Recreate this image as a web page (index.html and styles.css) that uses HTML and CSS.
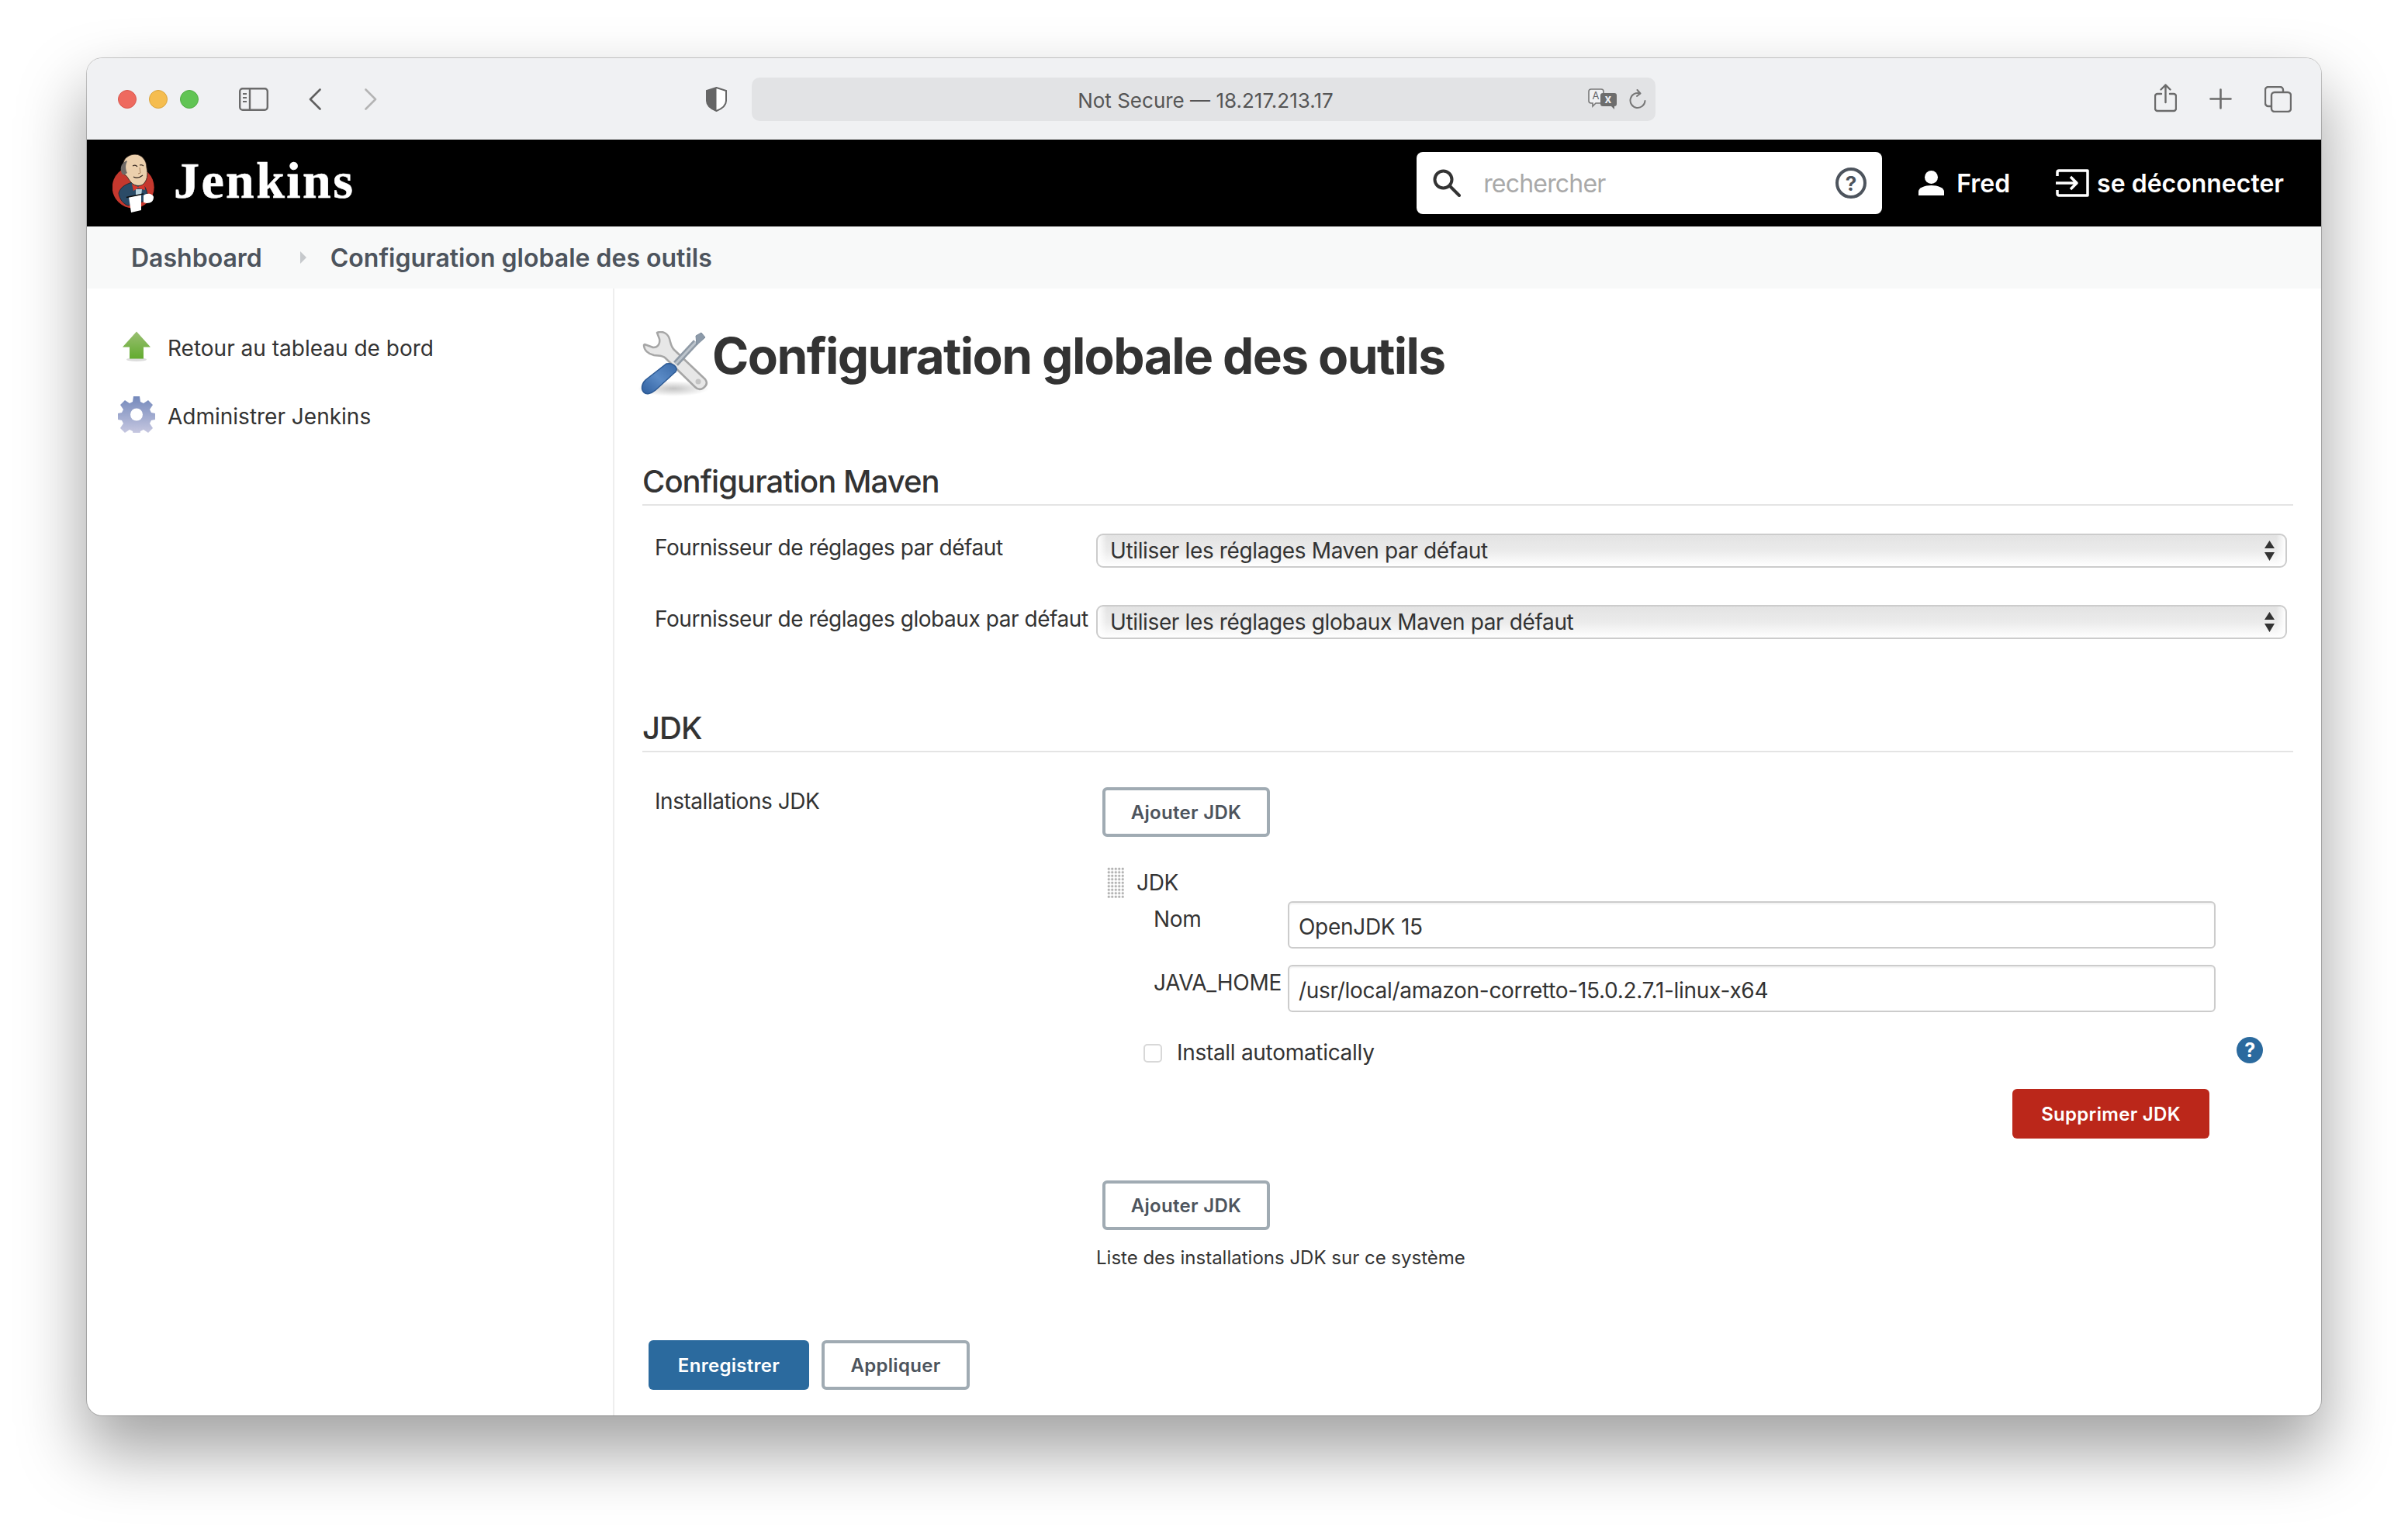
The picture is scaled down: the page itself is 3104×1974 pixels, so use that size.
FILE: index.html
```html
<!DOCTYPE html>
<html lang="fr">
<head>
    <meta charset="UTF-8">
    <title>Configuration globale des outils [Jenkins]</title>
    <link rel="stylesheet" href="styles.css">
</head>
<body>
<div class="window">

    <!-- Safari toolbar -->
    <div class="toolbar">
        <span class="light light-red"></span>
        <span class="light light-yellow"></span>
        <span class="light light-green"></span>
        <svg class="tb-sidebar" viewBox="0 0 38 30" fill="none" stroke="#6b6b6b" stroke-width="2.4">
            <rect x="1.2" y="1.2" width="35.6" height="27.6" rx="3.5"/>
            <path d="M14 1.2v27.6"/>
            <path d="M5 8h5M5 13h5M5 18h5" stroke-width="2"/>
        </svg>
        <svg class="tb-back" viewBox="0 0 16 28" fill="none" stroke="#5f5f5f" stroke-width="2.6" stroke-linecap="round" stroke-linejoin="round">
            <path d="M14.5 1.5 2 14l12.5 12.5"/>
        </svg>
        <svg class="tb-forward" viewBox="0 0 16 28" fill="none" stroke="#b4b4b4" stroke-width="2.6" stroke-linecap="round" stroke-linejoin="round">
            <path d="M1.5 1.5 14 14 1.5 26.5"/>
        </svg>
        <svg class="tb-shield" viewBox="0 0 27 32">
            <path d="M13.5 1 26 5v13c0 6-5 10-12.500 13C6 28 1 24 1 18V5Z" fill="#fff" stroke="#666" stroke-width="2"/>
            <path d="M13.500 1 1 5v13c0 6 5 10 12.500 13Z" fill="#666"/>
        </svg>
        <div class="address">
            <span class="address-text">Not Secure — 18.217.213.17</span>
            <svg class="tb-translate" viewBox="0 0 38 27">
                <path d="M4 1h13a3 3 0 0 1 3 3v12a3 3 0 0 1-3 3H10l-4 4v-4H4a3 3 0 0 1-3-3V4a3 3 0 0 1 3-3Z" fill="#f0f1f3" stroke="#777" stroke-width="1.600"/>
                <text x="5.500" y="14" class="tr-a">A</text>
                <path d="M19 6h15a3 3 0 0 1 3 3v11a3 3 0 0 1-3 3v4l-4-4H19a3 3 0 0 1-3-3V9a3 3 0 0 1 3-3Z" fill="#6d6d6d"/>
                <text x="21.500" y="19" class="tr-x">x</text>
            </svg>
            <svg class="tb-reload" viewBox="0 0 22 26" fill="none" stroke="#777" stroke-width="2" stroke-linecap="round" stroke-linejoin="round">
                <path d="M14 5.500A9.500 9.500 0 1 0 20.500 15"/>
                <path d="M10.500 1l4 4.500-4.500 3.500"/>
            </svg>
        </div>
        <svg class="tb-share" viewBox="0 0 29 37" fill="none" stroke="#6b6b6b" stroke-width="2.400" stroke-linecap="round" stroke-linejoin="round">
            <path d="M9 13H4a3 3 0 0 0-3 3v16a3 3 0 0 0 3 3h21a3 3 0 0 0 3-3V16a3 3 0 0 0-3-3h-5"/>
            <path d="M14.500 24V1.500M8.500 7.500l6-6 6 6"/>
        </svg>
        <svg class="tb-plus" viewBox="0 0 29 27" fill="none" stroke="#6b6b6b" stroke-width="2.600" stroke-linecap="round">
            <path d="M14.500 1.500v24M1.500 13.500h26"/>
        </svg>
        <svg class="tb-tabs" viewBox="0 0 35 34" fill="none" stroke="#6b6b6b" stroke-width="2.400">
            <path d="M8 26H5a4 4 0 0 1-4-4V5a4 4 0 0 1 4-4h15a4 4 0 0 1 4 4v3"/>
            <rect x="9" y="8" width="25" height="25" rx="4"/>
        </svg>
    </div>

    <!-- Jenkins header -->
    <header class="page-head">
        <svg class="logo" viewBox="0 0 55 75">
            <circle cx="26.700" cy="42.500" r="27" fill="#c5382e"/>
            <path d="M8 50C10 42 18 38 26 36l12 2c5 4 7 10 7 16l-2 6-23 6C14 64 9 58 8 50Z" fill="#2b4b67" stroke="#16242f" stroke-width=".8"/>
            <path d="M30 45h8l-1 9-7-2Z" fill="#b9d2dc"/>
            <path d="M25 38l8 4 8-5 1 9-9-2.500L27 47Z" fill="#d8392c"/>
            <path d="M14 14C13 5 22 0 29 0c9 0 15 8 15 17 2 9 1 17-5 22-5 3-12 1-15-3-3-3-5-8-7-9-4-1-6-7-3-13Z" fill="#ecd0ad" stroke="#33261f" stroke-width=".9"/>
            <path d="M13 26C9 20 10 12 18 8l1 1c-3 5-2 11 0 15l-3 2Z" fill="#6f6a66"/>
            <path d="M26 15q4-2 6 1M35 14q3-1 5 1M27 29q6 3 12-2" fill="none" stroke="#33261f" stroke-width="1.200"/>
            <path d="M35 17l1 7-3 1" fill="none" stroke="#a9825f" stroke-width="1"/>
            <path d="M21 55l16-3v20l-13 3Z" fill="#fff"/>
            <path d="M18 55.500 40 51" stroke="#0c0c0c" stroke-width="1.500"/>
            <path d="M40 53c5-4 12-2 13 2 0 5-3 8-9 8l-4-1Z" fill="#fff"/>
        </svg>
        <span class="brand">Jenkins</span>
        <div class="search">
            <svg class="search-icon" viewBox="0 0 36 36" fill="none" stroke="#333" stroke-width="4" stroke-linecap="round">
                <circle cx="13.500" cy="13.500" r="11"/>
                <path d="m22 22 12 12"/>
            </svg>
            <input class="search-input" type="text" placeholder="rechercher">
            <span class="search-help">?</span>
        </div>
        <svg class="user-icon" viewBox="0 0 33 32" fill="#fff">
            <circle cx="16.500" cy="8.500" r="8.500"/>
            <path d="M0 32v-5c0-5 8-8 16.500-8S33 22 33 27v5Z"/>
        </svg>
        <span class="head-link head-user">Fred</span>
        <svg class="logout-icon" viewBox="0 0 43 36" fill="none" stroke="#fff" stroke-width="3.500" stroke-linejoin="round">
            <path d="M2 9V4a2 2 0 0 1 2-2h37v32H4a2 2 0 0 1-2-2v-5"/>
            <path d="M0 18h26M19 10l8 8-8 8"/>
        </svg>
        <span class="head-link head-logout">se déconnecter</span>
    </header>

    <!-- Breadcrumb -->
    <nav class="breadcrumb">
        <span>Dashboard</span>
        <svg class="crumb-arrow" viewBox="0 0 8 16"><path d="M0 0l8 8-8 8Z" fill="#c6c9cc"/></svg>
        <span>Configuration globale des outils</span>
    </nav>

    <div class="main">
        <aside class="sidebar">
            <div class="side-item">
                <svg class="side-icon" viewBox="0 0 48 40">
                    <defs>
                        <linearGradient id="arrowGreen" x1="0" y1="0" x2="0" y2="1">
                            <stop offset="0" stop-color="#9abf72"/>
                            <stop offset="1" stop-color="#62ab2f"/>
                        </linearGradient>
                    </defs>
                    <ellipse cx="24" cy="37" rx="13" ry="2.500" fill="#ddd"/>
                    <path d="M24 1 42 21h-9v15H15V21H6Z" fill="url(#arrowGreen)"/>
                </svg>
                <span>Retour au tableau de bord</span>
            </div>
            <div class="side-item">
                <svg class="side-icon" viewBox="0 0 48 47">
                    <defs>
                        <linearGradient id="gearBlue" gradientUnits="userSpaceOnUse" x1="0" y1="0" x2="0" y2="47">
                            <stop offset="0" stop-color="#7388bb"/>
                            <stop offset="1" stop-color="#c6c7e0"/>
                        </linearGradient>
                    </defs>
                    <path fill="url(#gearBlue)" d="M20 0h8l1 7 4 2 6-4 6 6-4 6 2 4 5 1v8l-5 1-2 4 4 6-6 6-6-4-4 2-1 6h-8l-1-6-4-2-6 4-6-6 4-6-2-4-5-1v-8l5-1 2-4-4-6 6-6 6 4 4-2Z"/>
                    <circle cx="24" cy="23.500" r="8" fill="#fff"/>
                </svg>
                <span>Administrer Jenkins</span>
            </div>
        </aside>

        <main class="content">
            <div class="title-row">
                <svg class="title-icon" viewBox="0 0 95 84">
                    <defs>
                        <linearGradient id="driverBlue" x1="0" y1="1" x2="1" y2="0">
                            <stop offset="0" stop-color="#2f5f9f"/>
                            <stop offset=".5" stop-color="#5b8bc6"/>
                            <stop offset="1" stop-color="#3a6aa8"/>
                        </linearGradient>
                        <radialGradient id="toolShadow">
                            <stop offset="0" stop-color="#c4c4c4"/>
                            <stop offset="1" stop-color="#fff"/>
                        </radialGradient>
                    </defs>
                    <ellipse cx="47" cy="74" rx="46" ry="10" fill="url(#toolShadow)"/>
                    <path d="M26 2c7-3 14 1 16 8 2 7 2 10 6 14l40 38c3 4 2 8-2 11-4 3-8 2-11-1L36 34c-4-3-8-2-14-3-8-2-13-7-13-13l1-1 11 4c7 0 9-6 8-11Z" fill="#e7e7e7" stroke="#a6a6a6" stroke-width="2.500" stroke-linejoin="round"/>
                    <circle cx="79" cy="65" r="3.500" fill="#c4c4c4"/>
                    <path d="M76 14 50 42" stroke="#8f9aa6" stroke-width="8"/>
                    <path d="M76 14 50 42" stroke="#bcc4cc" stroke-width="3"/>
                    <path d="m76 6 7-4 5 6-11 10Z" fill="#8c9aa9" stroke="#7d8b9b" stroke-width="1"/>
                    <path d="M38 42c5-1 9 0 12 4 2 3 1 6-2 8L24 76c-6 5-12 6-15 3-4-4-3-11 2-16Z" fill="url(#driverBlue)" stroke="#2d5a94" stroke-width="1.500"/>
                </svg>
                <h1 class="page-title">Configuration globale des outils</h1>
            </div>

            <h2 class="section-head section-maven">Configuration Maven</h2>
            <div class="form-row row-first">
                <label class="form-label">Fournisseur de réglages par défaut</label>
                <div class="select-wrap">
                    <select class="select">
                        <option>Utiliser les réglages Maven par défaut</option>
                    </select>
                    <svg class="select-arrows" viewBox="0 0 13 26"><path d="M6.500 0 13 10H0ZM0 15h13L6.500 26Z" fill="#333"/></svg>
                </div>
            </div>
            <div class="form-row row-second">
                <label class="form-label">Fournisseur de réglages globaux par défaut</label>
                <div class="select-wrap">
                    <select class="select">
                        <option>Utiliser les réglages globaux Maven par défaut</option>
                    </select>
                    <svg class="select-arrows" viewBox="0 0 13 26"><path d="M6.500 0 13 10H0ZM0 15h13L6.500 26Z" fill="#333"/></svg>
                </div>
            </div>

            <h2 class="section-head section-jdk">JDK</h2>
            <div class="form-row row-jdk">
                <label class="form-label label-jdk">Installations JDK</label>
                <div class="jdk-col">
                    <button class="btn btn-add">Ajouter JDK</button>

                    <div class="jdk-item-head">
                        <span class="drag-handle"></span>
                        <span>JDK</span>
                    </div>
                    <div class="jdk-field">
                        <label class="jdk-label">Nom</label>
                        <input class="text-input" type="text" value="OpenJDK 15">
                    </div>
                    <div class="jdk-field jdk-field-home">
                        <label class="jdk-label">JAVA_HOME</label>
                        <input class="text-input" type="text" value="/usr/local/amazon-corretto-15.0.2.7.1-linux-x64">
                    </div>
                    <div class="auto-row">
                        <input class="checkbox" type="checkbox">
                        <label class="auto-label">Install automatically</label>
                        <span class="help-round">?</span>
                    </div>
                    <div class="delete-row">
                        <button class="btn btn-delete">Supprimer JDK</button>
                    </div>

                    <button class="btn btn-add btn-add-bottom">Ajouter JDK</button>
                    <div class="hint">Liste des installations JDK sur ce système</div>
                </div>
            </div>

            <div class="bottom-bar">
                <button class="btn btn-save">Enregistrer</button>
                <button class="btn btn-apply">Appliquer</button>
            </div>
        </main>
    </div>
</div>
</body>
</html>
```

FILE: styles.css
```css
html {
    background-color: #fff;
}
body {
    margin: 0;
    padding: 75px 0 0 112px;
    height: 1974px;
    box-sizing: border-box;
    overflow: hidden;
    font-family: Inter, "Liberation Sans", sans-serif;
    font-size: 28px;
    color: #333;
}
.window {
    width: 2880px;
    height: 1750px;
    display: flex;
    flex-direction: column;
    overflow: hidden;
    border-radius: 20px;
    background-color: #fff;
    box-shadow: 0 0 0 1px rgba(0, 0, 0, 0.2), 0 44px 84px 4px rgba(0, 0, 0, 0.36);
}

/* toolbar */
.toolbar {
    height: 105px;
    flex: none;
    display: flex;
    align-items: center;
    padding-left: 40px;
    background-color: #f0f1f3;
}
.light {
    width: 24px;
    height: 24px;
    border-radius: 50%;
    margin-right: 16px;
    box-sizing: border-box;
}
.light-red { background-color: #ee6a5f; border: 1px solid #d8574d; }
.light-yellow { background-color: #f5bd4f; border: 1px solid #d9a43c; }
.light-green { background-color: #61c454; border: 1px solid #50ab44; margin-right: 0; }
.tb-sidebar { width: 38px; height: 30px; margin-left: 52px; }
.tb-back { width: 16px; height: 28px; margin-left: 52px; }
.tb-forward { width: 16px; height: 28px; margin-left: 56px; }
.tb-shield { width: 27px; height: 32px; margin-left: 424px; }
.address {
    width: 1165px;
    height: 56px;
    margin-left: 32px;
    padding: 0 12px 0 92px;
    box-sizing: border-box;
    display: flex;
    align-items: center;
    border-radius: 10px;
    background-color: #e2e3e5;
}
.address-text {
    flex: 1;
    text-align: center;
    font-size: 26px;
    color: #555;
    position: relative;
    top: 2px;
}
.tb-translate { width: 38px; height: 27px; }
.tr-a { font-size: 13px; fill: #666; font-family: Inter, sans-serif; }
.tr-x { font-size: 15px; font-weight: 700; fill: #f0f1f3; font-family: Inter, sans-serif; }
.tb-reload { width: 22px; height: 26px; margin-left: 15px; }
.tb-share { width: 29px; height: 37px; margin-left: 643px; margin-bottom: 2px; }
.tb-plus { width: 29px; height: 27px; margin-left: 42px; }
.tb-tabs { width: 35px; height: 34px; margin-left: 42px; }

/* black header */
.page-head {
    height: 112px;
    flex: none;
    display: flex;
    align-items: center;
    padding: 0 48px 0 33px;
    background-color: #000;
    color: #fff;
}
.logo {
    width: 55px;
    height: 75px;
}
.brand {
    margin: 0 0 7px 24px;
    font-family: "Liberation Serif", serif;
    font-weight: 700;
    font-size: 66px;
    letter-spacing: 2.400px;
    line-height: 1;
    color: #fff;
    -webkit-text-stroke: 0.6px #fff;
}
.search {
    width: 600px;
    height: 80px;
    margin-left: auto;
    padding: 0 20px 0 21px;
    box-sizing: border-box;
    display: flex;
    align-items: center;
    border-radius: 8px;
    background-color: #fff;
}
.search-icon {
    width: 36px;
    height: 36px;
    flex: none;
}
.search-input {
    flex: 1;
    min-width: 0;
    margin-left: 29px;
    padding: 0;
    border: none;
    outline: none;
    background: none;
    font-family: inherit;
    font-size: 32px;
    letter-spacing: -0.800px;
}
.search-input::placeholder {
    color: #a9a9a9;
    opacity: 1;
}
.search-help {
    width: 40px;
    height: 40px;
    flex: none;
    box-sizing: border-box;
    display: flex;
    align-items: center;
    justify-content: center;
    border: 4px solid #4d545d;
    border-radius: 50%;
    font-size: 26px;
    font-weight: 700;
    color: #4d545d;
}
.user-icon {
    width: 33px;
    height: 32px;
    margin-left: 47px;
}
.head-link {
    font-size: 32px;
    font-weight: 600;
    color: #fff;
}
.head-user { margin-left: 16px; }
.logout-icon {
    width: 43px;
    height: 36px;
    margin-left: 59px;
}
.head-logout { margin-left: 10px; }

/* breadcrumb */
.breadcrumb {
    height: 80px;
    flex: none;
    display: flex;
    align-items: center;
    padding-left: 57px;
    background-color: #f8f9f9;
    font-size: 32px;
    font-weight: 600;
    color: #4d545d;
}
.crumb-arrow {
    width: 8px;
    height: 16px;
    margin: 0 31px 0 49px;
}

/* main */
.main {
    flex: 1;
    display: flex;
    min-height: 0;
}
.sidebar {
    width: 680px;
    flex: none;
    box-sizing: border-box;
    padding: 33px 0 0 40px;
    border-right: 2px solid #eee;
}
.side-item {
    height: 88px;
    display: flex;
    align-items: center;
    gap: 16px;
    color: #333;
}
.side-icon {
    width: 48px;
    height: 47px;
    margin-bottom: 5px;
}
.content {
    flex: 1;
    padding: 0 36px;
}
.title-row {
    display: flex;
    align-items: flex-start;
    margin-top: 42px;
}
.title-icon {
    width: 95px;
    height: 84px;
    margin: 13px 2px 0 -7px;
    flex: none;
}
.page-title {
    margin: 0;
    font-size: 64px;
    font-weight: 700;
    letter-spacing: -1.600px;
    line-height: 90px;
    color: #333;
}
.section-head {
    margin: 0;
    height: 53px;
    line-height: 48px;
    font-size: 40px;
    font-weight: 500;
    letter-spacing: -0.950px;
    color: #333;
    border-bottom: 2px solid #e4e4e4;
}
.section-maven { margin-top: 86px; }
.section-jdk { margin-top: 91px; }
.form-row {
    display: flex;
    align-items: flex-start;
}
.row-first { margin-top: 36px; }
.row-second { margin-top: 48px; }
.form-label {
    width: 585px;
    flex: none;
    padding-left: 16px;
    box-sizing: border-box;
    line-height: 36px;
    letter-spacing: -0.450px;
    white-space: nowrap;
}
.select-wrap {
    width: 1535px;
    position: relative;
}
.select {
    display: block;
    width: 100%;
    height: 44px;
    padding: 0 0 0 16px;
    box-sizing: border-box;
    appearance: none;
    border: 2px solid #ccc;
    border-radius: 9px;
    font-family: inherit;
    font-size: 28px;
    letter-spacing: -0.370px;
    color: #333;
    background-color: #fff;
    background-image:
        linear-gradient(to right, rgba(255, 255, 255, 0), #fff),
        linear-gradient(to left, rgba(255, 255, 255, 0), #fff),
        linear-gradient(#e3e3e3 0%, #ebebeb 50%, #fff 100%);
    background-size: 12px 100%, 12px 100%, 100% 100%;
    background-position: right top, left top, left top;
    background-repeat: no-repeat;
}
.select-arrows {
    position: absolute;
    top: 9px;
    right: 16px;
    width: 13px;
    height: 26px;
}
.row-jdk { margin-top: 45px; }
.label-jdk { line-height: 36px; }
.jdk-col {
    width: 1535px;
    letter-spacing: -0.300px;
}
.btn {
    display: block;
    height: 64px;
    box-sizing: border-box;
    padding: 0;
    border: 4px solid #a0abb3;
    border-radius: 6px;
    background-color: #fff;
    font-family: inherit;
    font-size: 24px;
    font-weight: 600;
    letter-spacing: 0.300px;
    color: #4d545d;
}
.btn-add {
    width: 216px;
    margin-left: 8px;
}
.jdk-item-head {
    display: flex;
    align-items: center;
    gap: 16px;
    height: 40px;
    margin: 39px 0 0 14px;
}
.drag-handle {
    width: 22px;
    height: 40px;
    background-image: radial-gradient(circle, #b4b4b4 1.500px, rgba(180, 180, 180, 0) 2px);
    background-size: 4.500px 4.500px;
}
.jdk-field {
    display: flex;
    margin-top: 4px;
}
.jdk-field-home { margin-top: 21px; }
.jdk-label {
    width: 173px;
    flex: none;
    margin-left: 74px;
    line-height: 46px;
    white-space: nowrap;
}
.text-input {
    width: 1196px;
    height: 61px;
    box-sizing: border-box;
    padding: 5px 12px 0 12px;
    border: 2px solid #ccc;
    border-radius: 6px;
    box-shadow: inset 0 2px 2px rgba(0, 0, 0, 0.05);
    font-family: inherit;
    font-size: 28px;
    letter-spacing: -0.300px;
    color: #333;
    outline: none;
}
.auto-row {
    display: flex;
    align-items: flex-start;
    height: 34px;
    margin-top: 32px;
    padding-left: 61px;
}
.checkbox {
    width: 24px;
    height: 24px;
    margin: 9px 0 0;
    appearance: none;
    border: 2px solid #d8d8d8;
    border-radius: 5px;
    background-color: #fff;
}
.auto-label {
    margin-left: 19px;
    line-height: 40px;
}
.help-round {
    width: 34px;
    height: 34px;
    margin: 0 31px 0 auto;
    display: flex;
    align-items: center;
    justify-content: center;
    border-radius: 50%;
    background-color: #2b6a9e;
    font-size: 25px;
    font-weight: 700;
    color: #fff;
}
.delete-row {
    display: flex;
    justify-content: flex-end;
    margin-top: 33px;
    padding-right: 100px;
}
.btn-delete {
    width: 254px;
    border: none;
    background-color: #bb271a;
    color: #fff;
}
.btn-add-bottom { margin-top: 54px; }
.hint {
    margin: 18px 0 0 0;
    font-size: 24px;
    line-height: 36px;
    letter-spacing: 0;
    color: #333;
}
.bottom-bar {
    display: flex;
    gap: 16px;
    margin: 88px 0 0 8px;
}
.btn-save {
    width: 207px;
    border: none;
    background-color: #2b6a9e;
    color: #fff;
}
.btn-apply {
    width: 191px;
}
```
